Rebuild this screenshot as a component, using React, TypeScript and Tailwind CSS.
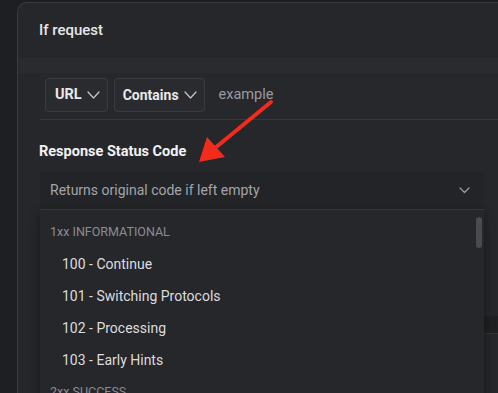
import React from 'react';

const items = ['100 - Continue', '101 - Switching Protocols', '102 - Processing', '103 - Early Hints'];

function Chevron({ className }: { className?: string }) {
  return (
    <svg className={className} width="13" height="8" viewBox="0 0 13 8" fill="none">
      <path d="M1 1 6.5 7 12 1" stroke="currentColor" strokeWidth="1.2" strokeLinecap="round" strokeLinejoin="round" />
    </svg>
  );
}

export default function App() {
  return (
    <div
      className="relative w-[498px] h-[393px] overflow-hidden bg-[#1e1f22] pt-[2px] pl-[17px]"
      style={{ fontFamily: 'Roboto, "Noto Sans", sans-serif' }}
    >
      {/* panel */}
      <div className="relative w-[500px] h-[420px] bg-[#26272b] border-l border-t border-[#3a3b40] rounded-tl-[10px]">
        <div className="h-[55px] flex items-center pl-[21px] text-[15px] font-medium text-[#e6e6e8]">If request</div>
        <div className="h-[15px] bg-[#2a2b2f]" />

        {/* condition row */}
        <div className="ml-[22px] h-[47px] flex items-center gap-[6px] pl-[5px] pb-[2px] border-b border-[#38393d] bg-[#27282c]">
          <button className="h-[34px] pl-[9px] pr-[7px] flex items-center gap-[5px] rounded-[4px] border border-[#3b3c41] bg-[#2a2b2f] text-[14.5px] font-bold text-[#e8e8ea]">
            URL
            <Chevron className="text-[#c8c8cc]" />
          </button>
          <button className="h-[34px] pl-[8px] pr-[7px] flex items-center gap-[5px] rounded-[4px] border border-[#3b3c41] bg-[#2a2b2f] text-[14px] font-bold text-[#e8e8ea]">
            Contains
            <Chevron className="text-[#c8c8cc]" />
          </button>
          <span className="ml-[8px] text-[14.5px] text-[#9a9ba0]">example</span>
        </div>

        <div className="pl-[21px] pt-[21px] h-[52px] text-[14.5px] font-bold text-[#f2f2f4]">Response Status Code</div>

        {/* form below (partly hidden by menu) */}
        <div className="absolute left-[466px] top-[313px] w-[40px] h-[18px] bg-[#1f2022] border-b border-[#34353a]" />

        {/* select + menu */}
        <div className="relative ml-[22px] w-[444px] z-10">
          <div className="h-[38px] flex items-center justify-between pl-[10px] pr-[14px] bg-[#232427] border-b border-[#3a3b40]">
            <span className="text-[14px] text-[#a3a4a9]">Returns original code if left empty</span>
            <svg width="11" height="7" viewBox="0 0 11 7" fill="none" className="text-[#9a9ba0]">
              <path d="M1 1 5.5 5.5 10 1" stroke="currentColor" strokeWidth="1.3" strokeLinecap="round" strokeLinejoin="round" />
            </svg>
          </div>
          <div className="relative h-[200px] bg-[#26272b] shadow-[0_4px_10px_rgba(0,0,0,0.4)]">
            <div className="absolute right-[2px] top-[7px] w-[6px] h-[31px] rounded-full bg-[#4a4b50]" />
            <div className="h-[38px] flex items-center pl-[10px] pt-[6px] text-[12.5px] text-[#8b8c91]">1xx INFORMATIONAL</div>
            {items.map((t) => (
              <div key={t} className="h-[32px] flex items-center pl-[22px] text-[14px] text-[#dcdcdf]">{t}</div>
            ))}
            <div className="h-[32px] flex items-center pl-[10px] text-[12.5px] text-[#8b8c91]">2xx SUCCESS</div>
          </div>
        </div>
      </div>

      {/* annotation arrow */}
      <svg className="absolute left-0 top-0 pointer-events-none" width="498" height="393" viewBox="0 0 498 393">
        <line x1="271" y1="102" x2="215" y2="148" stroke="#f22b1d" strokeWidth="4" strokeLinecap="round" />
        <polygon points="199,162 207,137 225,157" fill="#f22b1d" />
      </svg>
    </div>
  );
}
